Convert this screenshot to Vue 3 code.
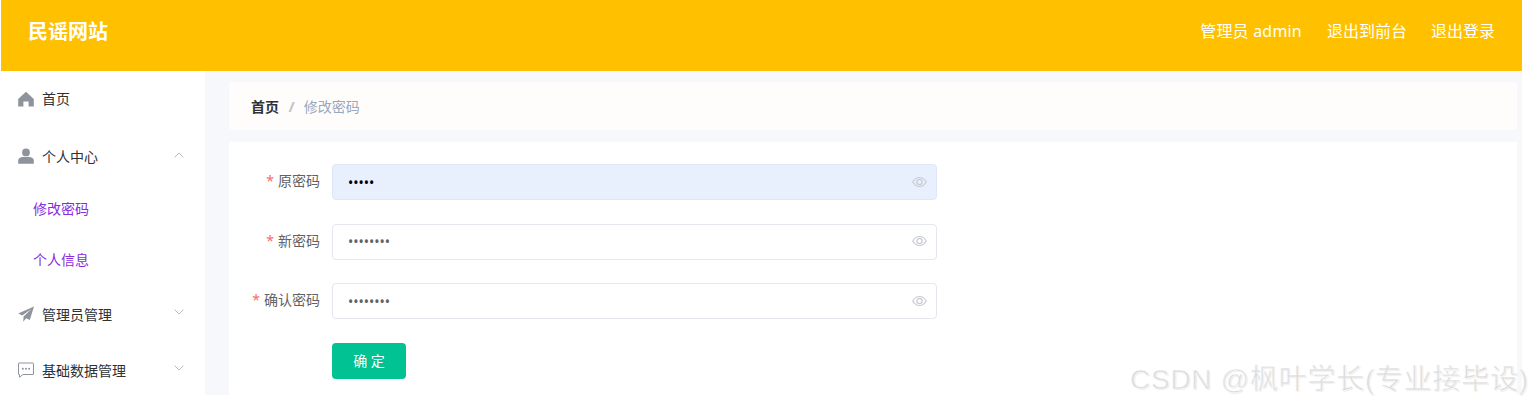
<script setup>
const fields = [
  { label: '原密码', value: '12345', filled: true },
  { label: '新密码', value: '12345678', filled: false },
  { label: '确认密码', value: '12345678', filled: false },
]
const actions = ['管理员 admin', '退出到前台', '退出登录']
</script>

<template>
  <div class="page">
    <header class="top">
      <div class="logo">民谣网站</div>
      <nav class="actions">
        <span v-for="a in actions" :key="a">{{ a }}</span>
      </nav>
    </header>
    <div class="body">
      <aside class="side">
        <div class="item home">
          <svg class="ico" viewBox="0 0 16 16"><path fill="#8f939c" d="M8 .8 15.800 8v7.400h-5.200v-5H5.400v5H.2V8z" /></svg>
          <span>首页</span>
        </div>
        <div class="item center">
          <svg class="ico" viewBox="0 0 16 16"><circle cx="8" cy="4.400" r="3.900" fill="#8f939c" /><path fill="#8f939c" d="M.2 15.800v-3.200C.2 10.200 2.400 9 4.800 9h6.400c2.400 0 4.600 1.200 4.600 3.600v3.200z" /></svg>
          <span>个人中心</span>
          <svg class="chev" viewBox="0 0 10 6"><path d="M.6 5.400 5 1l4.400 4.400" /></svg>
        </div>
        <div class="sub">修改密码</div>
        <div class="sub">个人信息</div>
        <div class="item admin">
          <svg class="ico" viewBox="0 0 16 16"><path fill="#8f939c" d="M16 .4 .2 7.400l4 2.200L13.400 3 5.600 10.600l-.4 5.200 3-3.600 3.600 1.800z" /></svg>
          <span>管理员管理</span>
          <svg class="chev" viewBox="0 0 10 6"><path d="M.6.600 5 5 9.400.600" /></svg>
        </div>
        <div class="item base">
          <svg class="ico" viewBox="0 0 16 16"><path fill="none" stroke="#8f939c" stroke-width="1" d="M1 1h14a.5.5 0 0 1 .5.5v10.500a.5.5 0 0 1-.5.5H5L1.500 15.200v-2.700H1a.5.5 0 0 1-.5-.5V1.500A.5.5 0 0 1 1 1z" /><circle cx="4.800" cy="6.800" r="1" fill="#8f939c" /><circle cx="8" cy="6.800" r="1" fill="#8f939c" /><circle cx="11.200" cy="6.800" r="1" fill="#8f939c" /></svg>
          <span>基础数据管理</span>
          <svg class="chev" viewBox="0 0 10 6"><path d="M.6.600 5 5 9.400.600" /></svg>
        </div>
      </aside>
      <main class="main">
        <div class="crumb">
          <b>首页</b>
          <i>/</i>
          <span>修改密码</span>
        </div>
        <form class="card" @submit.prevent>
          <div v-for="f in fields" :key="f.label" class="row">
            <label class="lab"><em>*</em>{{ f.label }}</label>
            <div class="field" :class="{ filled: f.filled }">
              <input type="password" :value="f.value" readonly />
              <svg class="eye" viewBox="0 0 16 12"><path d="M.8 6C2.600 2.800 5 1.200 8 1.200S13.400 2.800 15.200 6C13.400 9.200 11 10.800 8 10.800S2.600 9.200.8 6z" /><circle cx="8" cy="6" r="2.800" /></svg>
            </div>
          </div>
          <div class="row submit">
            <button type="button" class="btn">确 定</button>
          </div>
        </form>
      </main>
    </div>
    <div class="mark">CSDN @枫叶学长(专业接毕设)</div>
  </div>
</template>

<style>
html, body { margin: 0; background: #fff; overflow: hidden; }
</style>

<style scoped>
.page {
  position: relative;
  width: 1531px;
  height: 407px;
  padding: 0 9px 12px 1px;
  box-sizing: border-box;
  overflow: hidden;
  font-family: "Noto Sans", "Noto Sans CJK SC", sans-serif;
  font-size: 14px;
  color: #303133;
  background: #fff;
}
.top {
  height: 71px;
  background: #ffc000;
  color: #fff;
  display: flex;
  align-items: center;
  justify-content: space-between;
  padding: 0 27px 11px 27px;
  box-sizing: border-box;
}
.logo { font-size: 20px; font-weight: 700; }
.actions { display: flex; gap: 24px; font-size: 16px; }
.actions span:first-child { letter-spacing: .2px; margin-right: 1px; }
.body { display: flex; height: 324px; overflow: hidden; background: #f6f8fb; }
.side { width: 204px; flex: none; background: #fff; }
.item {
  height: 56px;
  display: flex;
  align-items: center;
  padding: 0 18px 0 17px;
  color: #303133;
}
.item span { flex: 1; }
.home span, .center span { padding-bottom: 2px; }
.center { height: 52px; margin-top: 4px; }
.center .ico { margin-bottom: 2px; }
.admin { margin-top: 1px; }
.ico { width: 16px; height: 16px; margin-right: 8px; flex: none; }
.chev { width: 10px; height: 6px; fill: none; stroke: #b9bcc2; stroke-width: 1; margin-top: -5px; flex: none; margin-right: 3px; }
.sub { height: 51px; line-height: 51px; padding-left: 32px; color: #8a2be2; }
.main { flex: 1; padding: 11px 5px 0 24px; min-width: 0; }
.crumb {
  height: 48px;
  background: #fffdfb;
  border-radius: 4px;
  display: flex;
  align-items: center;
  padding-left: 22px;
  margin-bottom: 12px;
}
.crumb b { font-weight: 700; color: #303133; }
.crumb i { font-style: normal; color: #c0c4cc; margin: 0 9px 0 9.500px; font-weight: 700; font-size: 15px; }
.crumb span { color: #97a8be; }
.card { background: #fff; padding: 22px 0 0 0; height: 260px; box-sizing: border-box; }
.row { display: flex; align-items: center; height: 36px; margin-bottom: 23.67px; }
.lab { width: 91px; text-align: right; color: #606266; margin-right: 12px; white-space: nowrap; padding-bottom: 4px; }
.lab em { font-style: normal; color: #f56c6c; margin-right: 4px; }
.field {
  width: 605px;
  height: 36px;
  border: 1px solid #e4e7ed;
  border-radius: 4px;
  box-sizing: border-box;
  display: flex;
  align-items: center;
  background: #fff;
}
.field.filled { background: #e8f0fe; border-color: #dfe7f6; }
.field input {
  flex: 1;
  min-width: 0;
  border: 0;
  outline: 0;
  background: transparent;
  padding: 0 0 0 15px;
  font: inherit;
  font-size: 14px;
  color: #606266;
}
.field.filled input { color: #000; }
.eye { width: 15px; height: 12px; margin: 0 9px 1px 0; fill: none; stroke: #c8cbd1; stroke-width: 1.3; flex: none; }
.submit { margin-left: 103px; }
.btn {
  width: 74px;
  height: 36px;
  border: 0;
  border-radius: 4px;
  background: #00c292;
  color: #fff;
  font: inherit;
  font-size: 14px;
  padding: 0 0 2px;
}
.mark {
  position: absolute;
  left: 1130px;
  top: 362px;
  font-family: "Liberation Sans", "Noto Sans CJK SC", sans-serif;
  font-size: 28px;
  letter-spacing: .75px;
  line-height: 36px;
  white-space: nowrap;
  color: #dcdcdc;
  -webkit-text-stroke: .5px #fff;
  paint-order: fill stroke;
  text-shadow: 1px 1px 1px rgba(0, 0, 0, .08);
}
</style>
